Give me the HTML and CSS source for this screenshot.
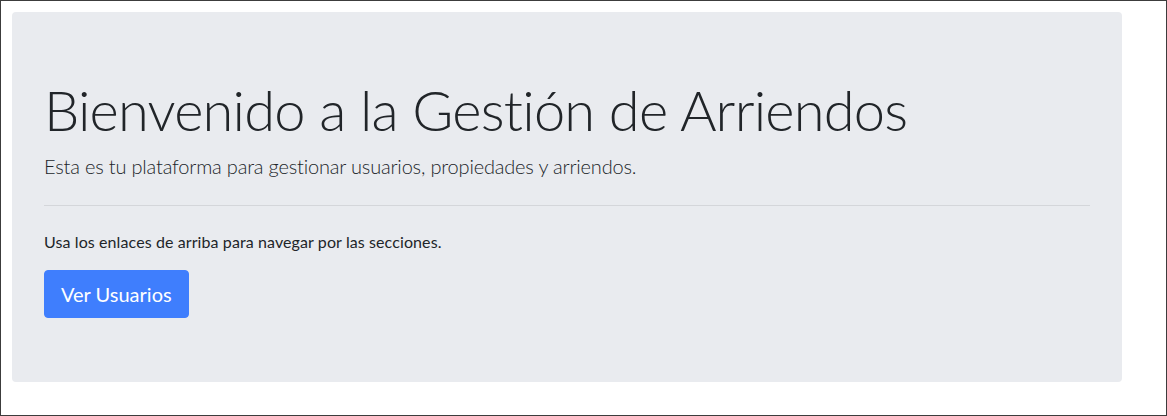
FILE: index.html
```html
<!DOCTYPE html>
<html lang="es">
<head>
<meta charset="utf-8">
<title>Gestión de Arriendos</title>
<link rel="stylesheet" href="styles.css">
</head>
<body>
<main class="page">
  <section class="jumbotron">
    <h1 class="display">Bienvenido a la Gestión de Arriendos</h1>
    <p class="lead">Esta es tu plataforma para gestionar usuarios, propiedades y arriendos.</p>
    <hr class="divider">
    <p class="text">Usa los enlaces de arriba para navegar por las secciones.</p>
    <a class="btn" href="#">Ver Usuarios</a>
  </section>
</main>
</body>
</html>
```
FILE: styles.css
```css
* { box-sizing: border-box; }
html, body { margin: 0; padding: 0; }
body {
  width: 1167px;
  height: 416px;
  border: 1px solid #3c3c3c;
  background: #fff;
  font-family: "Lato", "Open Sans", sans-serif;
  font-variant-ligatures: none;
  color: #212529;
  overflow: hidden;
}
.page {
  padding: 11px;
}
.jumbotron {
  width: 1110px;
  background: #e9ebef;
  border-radius: 4px;
  padding: 64px 32px;
  display: flex;
  flex-direction: column;
  align-items: flex-start;
}
.display {
  margin: 0 0 8px;
  font-size: 56px;
  font-weight: 300;
  line-height: 1.2;
  letter-spacing: -0.78px;
}
.lead {
  margin: 0;
  font-size: 20px;
  font-weight: 300;
  line-height: 30px;
  letter-spacing: -0.18px;
}
.divider {
  align-self: stretch;
  margin: 24px 0;
  border: 0;
  border-top: 1px solid #d4d6da;
  height: 0;
}
.text {
  margin: 0 0 16px;
  font-size: 16px;
  line-height: 24px;
  letter-spacing: 0.1px;
}
.btn {
  display: inline-block;
  background: #3f7efd;
  color: #fff;
  text-decoration: none;
  font-size: 20px;
  line-height: 30px;
  padding: 8px 16px;
  border: 1px solid #3f7efd;
  border-radius: 4px;
}
```
